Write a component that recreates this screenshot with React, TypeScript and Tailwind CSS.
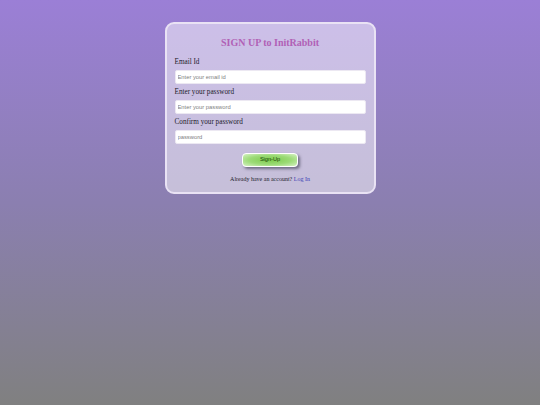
export default function App() {
  const fields = [
    { label: "Email Id", placeholder: "Enter your email id", type: "email" },
    { label: "Enter your password", placeholder: "Enter your password", type: "password" },
    { label: "Confirm your password", placeholder: "password", type: "password" },
  ];

  return (
    <div className="flex min-h-[405px] w-full justify-center bg-gradient-to-b from-[#9b7fd6] via-[#8b7fb0] to-[#808080] pt-[22px] font-['Liberation_Serif',serif]">
      <div className="h-fit w-[211px] rounded-[9px] border-2 border-[#e9e2f4] bg-white/50 px-[8px] pb-[9px]">
        <h1 className="pt-[13px] text-center text-[10px] font-bold leading-[12px] text-[#b161b6]">
          SIGN UP to InitRabbit
        </h1>
        <form className="mt-[5px]" onSubmit={(e) => e.preventDefault()}>
          {fields.map((f) => (
            <div key={f.label}>
              <label className="block h-[16px] text-[7.2px] leading-[16px] text-[#1c1c2c]">
                {f.label}
              </label>
              <input
                type={f.type}
                placeholder={f.placeholder}
                className="block h-[14px] w-full rounded-[2px] border border-[#ece8f2] bg-white px-[2px] font-['Liberation_Sans',sans-serif] text-[5.8px] text-[#333] outline-none placeholder:text-[#808080]"
              />
            </div>
          ))}
          <div className="mt-[9px] flex justify-center">
            <button
              type="submit"
              className="h-[14px] w-[56px] rounded-[4px] border-[1.5px] border-white bg-[radial-gradient(ellipse_at_center,#7ccb4c_0%,#9ddb78_55%,#d6f2c4_100%)] font-['Liberation_Sans',sans-serif] text-[5.6px] leading-none text-[#173f08] shadow-[2px_2px_3px_rgba(40,40,60,0.55)]"
            >
              Sign-Up
            </button>
          </div>
        </form>
        <p className="mt-[8px] text-center text-[6px] leading-[8px] text-[#1c1c2c]">
          Already have an account? <a href="#" className="text-[#3d3db5]">Log In</a>
        </p>
      </div>
    </div>
  );
}
